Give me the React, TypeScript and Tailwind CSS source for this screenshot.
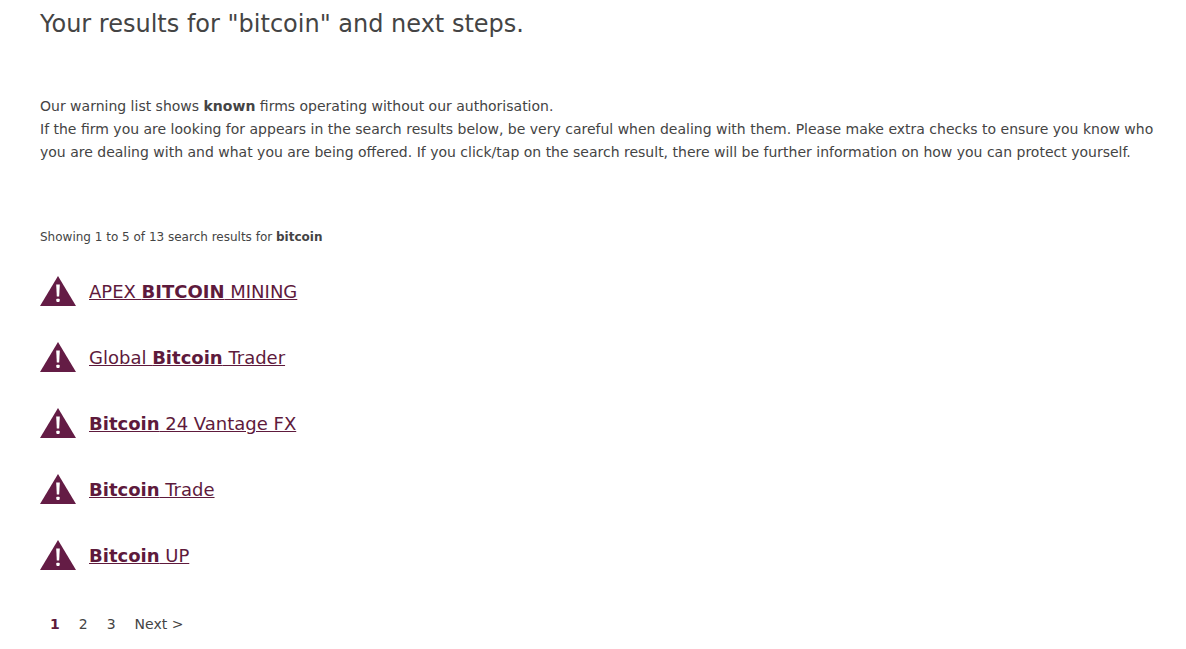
import React from "react";

const results = [
  { before: "APEX ", match: "BITCOIN", after: " MINING" },
  { before: "Global ", match: "Bitcoin", after: " Trader" },
  { before: "", match: "Bitcoin", after: " 24 Vantage FX" },
  { before: "", match: "Bitcoin", after: " Trade" },
  { before: "", match: "Bitcoin", after: " UP" },
];

function WarningIcon() {
  return (
    <svg viewBox="0 0 36 30" className="h-[30px] w-9 shrink-0" aria-hidden="true">
      <path d="M18 0 L36 30 H0 Z" fill="#641c45" />
      <path d="M16.2 8.5 H19.8 L19.2 20.5 H16.8 Z" fill="#fff" />
      <rect x="16.3" y="22.7" width="3.4" height="3.2" rx="0.8" fill="#fff" />
    </svg>
  );
}

export default function App() {
  return (
    <main className="bg-white pt-1 pr-5 pb-3 pl-10 font-['Verdana','DejaVu_Sans',sans-serif] text-[#444]">
      <h1 className="text-2xl leading-10">Your results for "bitcoin" and next steps.</h1>
      <p className="mt-[51px] text-sm leading-[23px]">
        Our warning list shows <b>known</b> firms operating without our authorisation.
        <br />
        If the firm you are looking for appears in the search results below, be very careful when dealing with them. Please make extra checks to ensure you know who you are dealing with and what you are being offered. If you click/tap on the search result, there will be further information on how you can protect yourself.
      </p>
      <p className="mt-[63px] text-xs leading-5">
        Showing 1 to 5 of 13 search results for <b>bitcoin</b>
      </p>
      <ul className="mt-[29px] flex flex-col gap-9">
        {results.map((r) => (
          <li key={r.before + r.match + r.after} className="flex items-center gap-[13px]">
            <WarningIcon />
            <a href="#" className="pt-0.5 text-lg leading-7 text-[#5e1a3c] underline">
              {r.before}
              <b>{r.match}</b>
              {r.after}
            </a>
          </li>
        ))}
      </ul>
      <nav aria-label="Pagination" className="mt-[42px] flex gap-[19px] pl-[10px] text-sm leading-6">
        <a href="#" aria-current="page" className="font-bold text-[#5e1a3c]">1</a>
        <a href="#">2</a>
        <a href="#">3</a>
        <a href="#">Next &gt;</a>
      </nav>
    </main>
  );
}
